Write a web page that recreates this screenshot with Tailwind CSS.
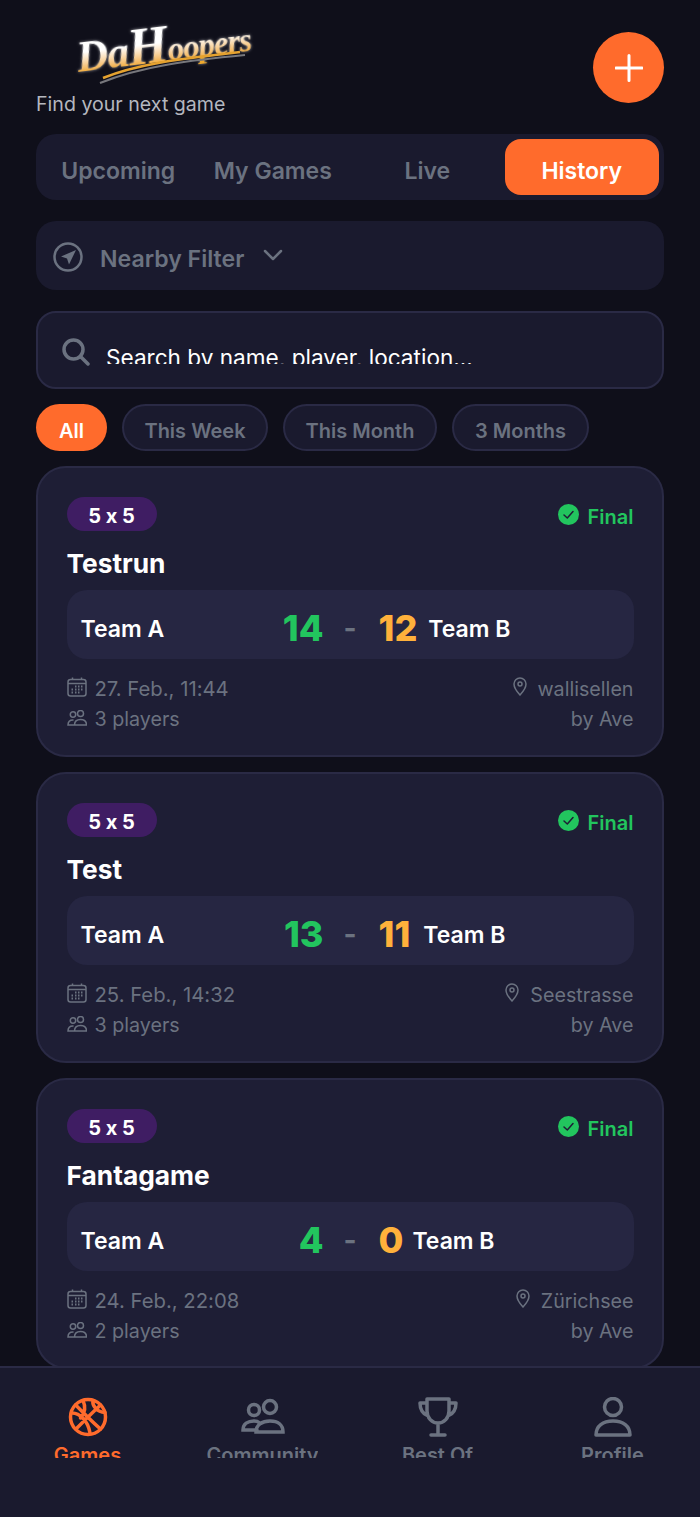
<!DOCTYPE html>
<html><head><meta charset="utf-8"><script src="https://cdn.jsdelivr.net/npm/@tailwindcss/browser@4"></script></head>
<body class="m-0 bg-[#0f0f1a]">
<div class="relative w-[700px] h-[1517px] overflow-hidden bg-[#0f0f1a] font-['Inter',sans-serif] text-white [font-feature-settings:'calt'_0]">
  <main class="px-[36px]">
    <header class="flex justify-between h-[134px]">
      <div class="flex flex-col">
        <div class="relative w-[190px] h-[64px] ml-[36px] mt-[24px]">
          <span class="absolute left-[5px] top-[3px] font-['Liberation_Serif',serif] italic font-bold leading-[56px] tracking-[-1px] whitespace-nowrap -rotate-[7deg] origin-left bg-gradient-to-b from-white from-38% to-[#f0a92c] to-68% bg-clip-text text-transparent drop-shadow-[0_0_1.500px_#9a9a9f]"><span class="text-[44px]">Da</span><span class="text-[52px]">H</span><span class="text-[33px]">oopers</span></span>
          <svg class="absolute left-0 top-0" width="180" height="64" viewBox="0 0 180 64" fill="none"><path d="M28 59C70 42 120 36 173 31" stroke="#77777c" stroke-width="2"/><path d="M31 54C70 38 120 34 168 28" stroke="#e5a22f" stroke-width="2.500"/></svg>
        </div>
        <p class="mt-[2px] text-[19.6px] leading-[28px] text-[#b4b7bf]">Find your next game</p>
      </div>
      <button class="mt-[32px] w-[71px] h-[71px] rounded-full bg-[#ff6b2c] flex items-center justify-center">
        <svg width="28" height="28" viewBox="0 0 28 28" fill="none" stroke="#fff" stroke-width="3" stroke-linecap="round"><path d="M14 1.500V26.500M1 14H27"/></svg>
      </button>
    </header>

    <nav class="h-[66px] rounded-[20px] bg-[#1a1a2e] p-[5px] grid grid-cols-4 text-[23px] font-semibold text-[#6b7280]">
      <div class="flex items-center justify-center rounded-[16px] pt-[8px]">Upcoming</div>
      <div class="flex items-center justify-center rounded-[16px] pt-[8px]">My Games</div>
      <div class="flex items-center justify-center rounded-[16px] pt-[8px]">Live</div>
      <div class="flex items-center justify-center rounded-[16px] pt-[8px] bg-[#ff6b2c] text-white">History</div>
    </nav>

    <div class="mt-[21px] h-[69px] rounded-[20px] bg-[#1a1a2e] flex items-center pl-[17px] text-[#6b7280]">
      <svg class="mt-[2px]" width="30" height="30" viewBox="0 0 30 30" fill="none" stroke="#6b7280" stroke-width="2.500"><circle cx="15" cy="15" r="13.500"/><path d="M23 8L8 14.500L14 16.500L16 22.500Z" fill="#6b7280" stroke="none"/></svg>
      <span class="ml-[17px] pt-[8px] text-[23.100px] font-semibold">Nearby Filter</span>
      <svg class="ml-[19px] -mt-[1px]" width="20" height="12" viewBox="0 0 20 12" fill="none" stroke="#6b7280" stroke-width="2.500" stroke-linecap="round" stroke-linejoin="round"><path d="M2 2L10 10L18 2"/></svg>
    </div>

    <div class="mt-[21px] h-[78px] rounded-[20px] bg-[#1a1a2e] border-2 border-[#2a2a45] flex items-start pl-[24px]">
      <svg class="mt-[25px]" width="28" height="28" viewBox="0 0 28 28" fill="none" stroke="#6b7280" stroke-width="3.500" stroke-linecap="round"><circle cx="11.500" cy="11.500" r="9.500"/><path d="M19 19L26 26"/></svg>
      <div class="ml-[16px] mt-[30px] h-[21px] overflow-hidden text-[22.600px] leading-[30px] text-white whitespace-nowrap">Search by name, player, location...</div>
    </div>

    <div class="mt-[15px] flex gap-[15px] text-[20px] font-semibold text-[#6b7280]">
      <div class="h-[47px] w-[71px] rounded-full bg-[#ff6b2c] text-white flex items-center justify-center pt-[6px]">All</div>
      <div class="h-[47px] w-[146px] rounded-full bg-[#1a1a2e] border-2 border-[#2a2a45] flex items-center justify-center pt-[6px]">This Week</div>
      <div class="h-[47px] w-[154px] rounded-full bg-[#1a1a2e] border-2 border-[#2a2a45] flex items-center justify-center pt-[6px]">This Month</div>
      <div class="h-[47px] w-[137px] rounded-full bg-[#1a1a2e] border-2 border-[#2a2a45] flex items-center justify-center pt-[6px]">3 Months</div>
    </div>

    <section class="mt-[15px] flex flex-col gap-[15px]">
      <article class="h-[291px] rounded-[30px] bg-[#1e1e35] border-2 border-[#2a2a45] px-[28.500px] pt-[29px]">
        <div class="flex justify-between items-start">
          <span class="h-[34px] w-[90px] rounded-full bg-[#3f1d63] flex items-center justify-center pt-[3px] text-[20px] font-bold">5 x 5</span>
          <span class="flex items-center gap-[9px] text-[#22c55e] text-[20px] font-semibold mt-[5px]">
            <svg width="21" height="21" viewBox="0 0 21 21" class="-mt-[5px]"><circle cx="10.500" cy="10.500" r="10.500" fill="#22c55e"/><path d="M6 11L9.300 14L15 7.500" fill="none" stroke="#1e1e35" stroke-width="1.500" stroke-linecap="round" stroke-linejoin="round"/></svg>Final</span>
        </div>
        <h2 class="mt-[15px] text-[26.300px] leading-[34px] font-bold">Testrun</h2>
        <div class="mt-[9px] h-[69px] rounded-[20px] bg-[#262642] px-[14px] pt-[6px] flex items-center">
          <div class="flex-1 flex items-center justify-between text-[23px] font-semibold"><span class="pt-[4px]">Team A</span><span class="-mr-[2px] text-[36px] font-extrabold text-[#22c55e]">14</span></div>
          <span class="w-[57px] text-center text-[#6b7280] text-[28px] font-bold">-</span>
          <div class="flex-1 flex items-center gap-[11px] text-[23px] font-semibold"><span class="text-[36px] font-extrabold text-[#ffb13b]">12</span><span class="pt-[4px]">Team B</span></div>
        </div>
        <div class="mt-[15px] flex justify-between text-[19.700px] leading-[30px] text-[#6b7280]">
          <div>
            <div class="flex items-center gap-[8px] text-[20.300px]"><svg class="-mt-[5px]" width="20" height="20" viewBox="0 0 20 20" fill="none" stroke="#6b7280" stroke-width="1.500"><rect x="1" y="2.500" width="18" height="16.500" rx="2.500"/><path d="M1 6.500H19M5.500 0.500V3M14.500 0.500V3"/><path d="M8 9.500H9.500M11 9.500H12.500M14 9.500H15.500M4.500 12.500H6M8 12.500H9.500M11 12.500H12.500M14 12.500H15.500M4.500 15.500H6M8 15.500H9.500M11 15.500H12.500" stroke-width="1.800"/></svg>27. Feb., 11:44</div>
            <div class="flex items-center gap-[8px]"><svg class="-mt-[3px]" width="20" height="16" viewBox="0 0 20 16" fill="none" stroke="#6b7280" stroke-width="1.500" stroke-linecap="round"><circle cx="6" cy="4.500" r="2.700"/><circle cx="13.500" cy="3.500" r="3"/><path d="M7 15H1C1 11.500 3 10 6 10M7.500 15C7.500 11.500 10 9.500 13.500 9.500S19.500 11.500 19.500 15Z"/></svg>3 players</div>
          </div>
          <div class="text-right">
            <div class="flex items-center justify-end gap-[11px]"><svg class="-mt-[5px]" width="14" height="19" viewBox="0 0 14 19" fill="none" stroke="#6b7280" stroke-width="1.500"><path d="M7 18C7 18 1 11.500 1 7A6 6 0 0 1 13 7C13 11.500 7 18 7 18Z"/><circle cx="7" cy="7" r="2"/></svg>wallisellen</div>
            <div>by Ave</div>
          </div>
        </div>
      </article>

      <article class="h-[291px] rounded-[30px] bg-[#1e1e35] border-2 border-[#2a2a45] px-[28.500px] pt-[29px]">
        <div class="flex justify-between items-start">
          <span class="h-[34px] w-[90px] rounded-full bg-[#3f1d63] flex items-center justify-center pt-[3px] text-[20px] font-bold">5 x 5</span>
          <span class="flex items-center gap-[9px] text-[#22c55e] text-[20px] font-semibold mt-[5px]">
            <svg width="21" height="21" viewBox="0 0 21 21" class="-mt-[5px]"><circle cx="10.500" cy="10.500" r="10.500" fill="#22c55e"/><path d="M6 11L9.300 14L15 7.500" fill="none" stroke="#1e1e35" stroke-width="1.500" stroke-linecap="round" stroke-linejoin="round"/></svg>Final</span>
        </div>
        <h2 class="mt-[15px] text-[26.300px] leading-[34px] font-bold">Test</h2>
        <div class="mt-[9px] h-[69px] rounded-[20px] bg-[#262642] px-[14px] pt-[6px] flex items-center">
          <div class="flex-1 flex items-center justify-between text-[23px] font-semibold"><span class="pt-[4px]">Team A</span><span class="-mr-[2px] text-[36px] font-extrabold text-[#22c55e]">13</span></div>
          <span class="w-[57px] text-center text-[#6b7280] text-[28px] font-bold">-</span>
          <div class="flex-1 flex items-center gap-[13px] text-[23px] font-semibold"><span class="text-[36px] font-extrabold text-[#ffb13b]">11</span><span class="pt-[4px]">Team B</span></div>
        </div>
        <div class="mt-[15px] flex justify-between text-[19.700px] leading-[30px] text-[#6b7280]">
          <div>
            <div class="flex items-center gap-[8px] text-[20.300px]"><svg class="-mt-[5px]" width="20" height="20" viewBox="0 0 20 20" fill="none" stroke="#6b7280" stroke-width="1.500"><rect x="1" y="2.500" width="18" height="16.500" rx="2.500"/><path d="M1 6.500H19M5.500 0.500V3M14.500 0.500V3"/><path d="M8 9.500H9.500M11 9.500H12.500M14 9.500H15.500M4.500 12.500H6M8 12.500H9.500M11 12.500H12.500M14 12.500H15.500M4.500 15.500H6M8 15.500H9.500M11 15.500H12.500" stroke-width="1.800"/></svg>25. Feb., 14:32</div>
            <div class="flex items-center gap-[8px]"><svg class="-mt-[3px]" width="20" height="16" viewBox="0 0 20 16" fill="none" stroke="#6b7280" stroke-width="1.500" stroke-linecap="round"><circle cx="6" cy="4.500" r="2.700"/><circle cx="13.500" cy="3.500" r="3"/><path d="M7 15H1C1 11.500 3 10 6 10M7.500 15C7.500 11.500 10 9.500 13.500 9.500S19.500 11.500 19.500 15Z"/></svg>3 players</div>
          </div>
          <div class="text-right">
            <div class="flex items-center justify-end gap-[11px]"><svg class="-mt-[5px]" width="14" height="19" viewBox="0 0 14 19" fill="none" stroke="#6b7280" stroke-width="1.500"><path d="M7 18C7 18 1 11.500 1 7A6 6 0 0 1 13 7C13 11.500 7 18 7 18Z"/><circle cx="7" cy="7" r="2"/></svg>Seestrasse</div>
            <div>by Ave</div>
          </div>
        </div>
      </article>

      <article class="h-[291px] rounded-[30px] bg-[#1e1e35] border-2 border-[#2a2a45] px-[28.500px] pt-[29px]">
        <div class="flex justify-between items-start">
          <span class="h-[34px] w-[90px] rounded-full bg-[#3f1d63] flex items-center justify-center pt-[3px] text-[20px] font-bold">5 x 5</span>
          <span class="flex items-center gap-[9px] text-[#22c55e] text-[20px] font-semibold mt-[5px]">
            <svg width="21" height="21" viewBox="0 0 21 21" class="-mt-[5px]"><circle cx="10.500" cy="10.500" r="10.500" fill="#22c55e"/><path d="M6 11L9.300 14L15 7.500" fill="none" stroke="#1e1e35" stroke-width="1.500" stroke-linecap="round" stroke-linejoin="round"/></svg>Final</span>
        </div>
        <h2 class="mt-[15px] text-[26.300px] leading-[34px] font-bold">Fantagame</h2>
        <div class="mt-[9px] h-[69px] rounded-[20px] bg-[#262642] px-[14px] pt-[6px] flex items-center">
          <div class="flex-1 flex items-center justify-between text-[23px] font-semibold"><span class="pt-[4px]">Team A</span><span class="-mr-[2px] text-[36px] font-extrabold text-[#22c55e]">4</span></div>
          <span class="w-[57px] text-center text-[#6b7280] text-[28px] font-bold">-</span>
          <div class="flex-1 flex items-center gap-[9px] text-[23px] font-semibold"><span class="text-[36px] font-extrabold text-[#ffb13b]">0</span><span class="pt-[4px]">Team B</span></div>
        </div>
        <div class="mt-[15px] flex justify-between text-[19.700px] leading-[30px] text-[#6b7280]">
          <div>
            <div class="flex items-center gap-[8px] text-[20.300px]"><svg class="-mt-[5px]" width="20" height="20" viewBox="0 0 20 20" fill="none" stroke="#6b7280" stroke-width="1.500"><rect x="1" y="2.500" width="18" height="16.500" rx="2.500"/><path d="M1 6.500H19M5.500 0.500V3M14.500 0.500V3"/><path d="M8 9.500H9.500M11 9.500H12.500M14 9.500H15.500M4.500 12.500H6M8 12.500H9.500M11 12.500H12.500M14 12.500H15.500M4.500 15.500H6M8 15.500H9.500M11 15.500H12.500" stroke-width="1.800"/></svg>24. Feb., 22:08</div>
            <div class="flex items-center gap-[8px]"><svg class="-mt-[3px]" width="20" height="16" viewBox="0 0 20 16" fill="none" stroke="#6b7280" stroke-width="1.500" stroke-linecap="round"><circle cx="6" cy="4.500" r="2.700"/><circle cx="13.500" cy="3.500" r="3"/><path d="M7 15H1C1 11.500 3 10 6 10M7.500 15C7.500 11.500 10 9.500 13.500 9.500S19.500 11.500 19.500 15Z"/></svg>2 players</div>
          </div>
          <div class="text-right">
            <div class="flex items-center justify-end gap-[11px]"><svg class="-mt-[5px]" width="14" height="19" viewBox="0 0 14 19" fill="none" stroke="#6b7280" stroke-width="1.500"><path d="M7 18C7 18 1 11.500 1 7A6 6 0 0 1 13 7C13 11.500 7 18 7 18Z"/><circle cx="7" cy="7" r="2"/></svg>Zürichsee</div>
            <div>by Ave</div>
          </div>
        </div>
      </article>
    </section>
  </main>

  <nav class="absolute left-0 right-0 bottom-0 h-[151px] bg-[#1a1a2e] border-t-2 border-[#2a2a45] grid grid-cols-4 text-[20px] font-semibold text-[#6b7280]">
    <div class="flex flex-col items-center text-[#ff6b2c] pt-[29px]">
      <svg class="h-[40px]" width="40" height="40" viewBox="0 0 40 40" fill="none" stroke="#ff6b2c" stroke-width="3.500" stroke-linecap="round"><circle cx="20" cy="20" r="17.500"/><path d="M7.500 8C14 14 22 23 32.500 32M32.500 8C26 14 15 25 8 32M15 3.500C18 10 17 16 12.500 21M4 16C12 16 20 24 22 36M25 3.500C24 9 29 15 37 15.500"/></svg>
      <div class="h-[21px] overflow-hidden leading-[36px]">Games</div>
    </div>
    <div class="flex flex-col items-center pt-[29px]">
      <svg class="h-[40px]" width="44" height="36" viewBox="0 0 44 36" fill="none" stroke="#6b7280" stroke-width="3.500" stroke-linecap="round"><circle cx="13" cy="11" r="5.500"/><circle cx="29" cy="8" r="6.500"/><path d="M16 31H2C2 25 7 22 13 22C15 22 17 22.500 18 23.500M15 33C15 26 21 22 29 22S42 26 42 33Z"/></svg>
      <div class="h-[21px] overflow-hidden leading-[36px]">Community</div>
    </div>
    <div class="flex flex-col items-center pt-[29px]">
      <svg class="h-[40px]" width="40" height="40" viewBox="0 0 40 40" fill="none" stroke="#6b7280" stroke-width="3.500" stroke-linecap="round" stroke-linejoin="round"><path d="M9 2H31V14C31 21 26 26 20 26S9 21 9 14ZM9 6H2C2 12 5 17 10 19M31 6H38C38 12 35 17 30 19M20 26V37M13 38H27"/></svg>
      <div class="h-[21px] overflow-hidden leading-[36px]">Best Of</div>
    </div>
    <div class="flex flex-col items-center pt-[29px]">
      <svg class="h-[40px]" width="38" height="40" viewBox="0 0 38 40" fill="none" stroke="#6b7280" stroke-width="3.500" stroke-linecap="round" stroke-linejoin="round"><circle cx="19" cy="10" r="8.500"/><path d="M2 38C2 29 9 24 19 24S36 29 36 38Z"/></svg>
      <div class="h-[21px] overflow-hidden leading-[36px]">Profile</div>
    </div>
  </nav>
</div>
</body></html>
